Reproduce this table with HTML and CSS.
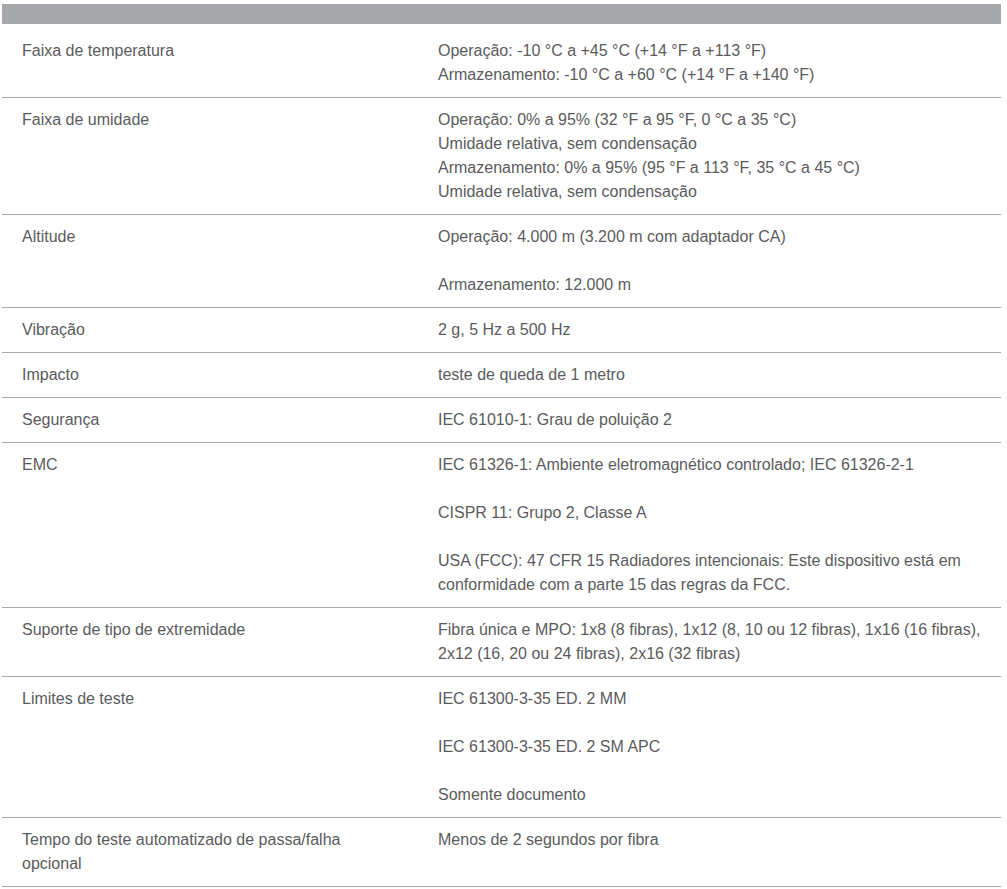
FILE: index.html
```html
<!DOCTYPE html>
<html lang="pt">
<head>
<meta charset="utf-8">
<title>Especificações</title>
<link rel="stylesheet" href="styles.css">
</head>
<body>
<div class="specs">
  <div class="specs-head"></div>
  <div class="row first">
    <div class="label">Faixa de temperatura</div>
    <div class="value">Operação: -10 °C a +45 °C (+14 °F a +113 °F)<br>Armazenamento: -10 °C a +60 °C (+14 °F a +140 °F)</div>
  </div>
  <div class="row">
    <div class="label">Faixa de umidade</div>
    <div class="value">Operação: 0% a 95% (32 °F a 95 °F, 0 °C a 35 °C)<br>Umidade relativa, sem condensação<br>Armazenamento: 0% a 95% (95 °F a 113 °F, 35 °C a 45 °C)<br>Umidade relativa, sem condensação</div>
  </div>
  <div class="row">
    <div class="label">Altitude</div>
    <div class="value"><p>Operação: 4.000 m (3.200 m com adaptador CA)</p><p>Armazenamento: 12.000 m</p></div>
  </div>
  <div class="row">
    <div class="label">Vibração</div>
    <div class="value">2 g, 5 Hz a 500 Hz</div>
  </div>
  <div class="row">
    <div class="label">Impacto</div>
    <div class="value">teste de queda de 1 metro</div>
  </div>
  <div class="row">
    <div class="label">Segurança</div>
    <div class="value">IEC 61010-1: Grau de poluição 2</div>
  </div>
  <div class="row">
    <div class="label">EMC</div>
    <div class="value"><p>IEC 61326-1: Ambiente eletromagnético controlado; IEC 61326-2-1</p><p>CISPR 11: Grupo 2, Classe A</p><p>USA (FCC): 47 CFR 15 Radiadores intencionais: Este dispositivo está em conformidade com a parte 15 das regras da FCC.</p></div>
  </div>
  <div class="row">
    <div class="label">Suporte de tipo de extremidade</div>
    <div class="value">Fibra única e MPO: 1x8 (8 fibras), 1x12 (8, 10 ou 12 fibras), 1x16 (16 fibras), 2x12 (16, 20 ou 24 fibras), 2x16 (32 fibras)</div>
  </div>
  <div class="row">
    <div class="label">Limites de teste</div>
    <div class="value"><p>IEC 61300-3-35 ED. 2 MM</p><p>IEC 61300-3-35 ED. 2 SM APC</p><p>Somente documento</p></div>
  </div>
  <div class="row">
    <div class="label">Tempo do teste automatizado de passa/falha opcional</div>
    <div class="value">Menos de 2 segundos por fibra</div>
  </div>
</div>
</body>
</html>
```

FILE: styles.css
```css
html, body {
  margin: 0;
  padding: 0;
  background: #ffffff;
}

body {
  padding: 4px 6px 0 2px;
  font-family: "Liberation Sans", Arial, sans-serif;
  font-size: 16px;
  line-height: 24px;
  color: #5b5b5d;
}

.specs {
  width: 999px;
}

.specs-head {
  height: 20px;
  background: #a7a8ab;
}

.row {
  display: grid;
  grid-template-columns: 416px 1fr;
  border-bottom: 1px solid #a9a9a9;
}

.label {
  padding: 10px 40px 10px 20px;
}

.value {
  padding: 10px 20px;
}

.row.first .label,
.row.first .value {
  padding-top: 15px;
}

.value p {
  margin: 0 0 24px;
}

.value p:last-child {
  margin-bottom: 0;
}
```
